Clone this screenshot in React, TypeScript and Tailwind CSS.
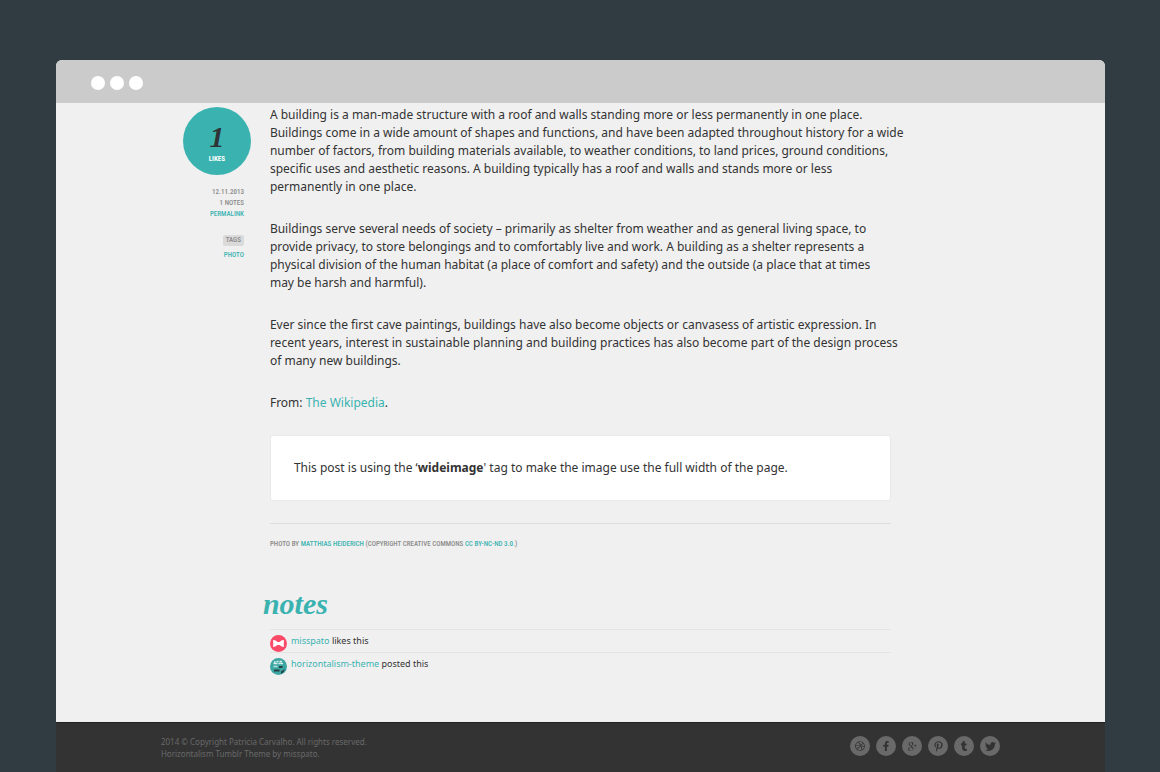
import type { ReactNode } from "react";
import type { IconType } from "react-icons";
import { FaDribbble, FaFacebookF, FaPinterestP, FaTumblr, FaTwitter } from "react-icons/fa";
import { TiSocialGooglePlus } from "react-icons/ti";

const SOCIAL: { name: string; icon: IconType; size: number }[] = [
  { name: "Dribbble", icon: FaDribbble, size: 10 },
  { name: "Facebook", icon: FaFacebookF, size: 10 },
  { name: "Google Plus", icon: TiSocialGooglePlus, size: 14 },
  { name: "Pinterest", icon: FaPinterestP, size: 11 },
  { name: "Tumblr", icon: FaTumblr, size: 10 },
  { name: "Twitter", icon: FaTwitter, size: 11 },
];

export default function App() {
  return (
    <div className="flex min-h-screen flex-col bg-[#303c41] pt-[60px] pr-[55px] pl-14 font-['Noto_Sans',sans-serif] text-[#333]">
      <div className="flex flex-1 flex-col overflow-hidden rounded-t-[6px] bg-[#f0f0f0]">
        <TitleBar />
        <main className="mx-auto grid w-4/5 flex-1 grid-cols-[109px_1fr_109px]">
          <PostMeta />
          <div>
            <Post />
            <Notes />
          </div>
        </main>
        <Footer />
      </div>
    </div>
  );
}

function TitleBar() {
  return (
    <div className="flex h-[43px] items-center gap-[5px] bg-[#cbcbcb] pt-[3px] pl-[35px]">
      <span className="size-3.5 rounded-full bg-white" />
      <span className="size-3.5 rounded-full bg-white" />
      <span className="size-3.5 rounded-full bg-white" />
    </div>
  );
}

function PostMeta() {
  return (
    <aside className="flex flex-col items-end pt-1 font-['Roboto_Condensed','Liberation_Sans_Narrow','Roboto',sans-serif] text-[7px] font-medium text-[#8a8a8a] uppercase">
      <div className="mr-[19px] flex size-[68px] flex-col items-center rounded-full bg-[#3ab3b0] pt-[14px] text-white">
        <span className="font-['Liberation_Serif',serif] text-[30px] leading-8 font-bold text-[#2e3436] italic">1</span>
        <span className="leading-3 font-bold">Likes</span>
      </div>
      <div className="mt-3 mr-[26px] flex flex-col items-end leading-[11px]">
        <span>12.11.2013</span>
        <span>1 Notes</span>
        <Link>Permalink</Link>
        <span className="mt-[15px] rounded-[2px] bg-[#dadada] px-[3px]">Tags</span>
        <span className="mt-1">
          <Link>Photo</Link>
        </span>
      </div>
    </aside>
  );
}

function Post() {
  return (
    <article className="text-[12px] leading-[18px]">
      {/* prose hangs slightly into the right gutter so the longest lines stay whole */}
      <div className="-mr-4 space-y-6 pt-[3px]">
        <p>
          A building is a man-made structure with a roof and walls standing more or less permanently in one place.
          <br />
          Buildings come in a wide amount of shapes and functions, and have been adapted throughout history for a wide
          <br />
          number of factors, from building materials available, to weather conditions, to land prices, ground conditions,
          <br />
          specific uses and aesthetic reasons. A building typically has a roof and walls and stands more or less
          <br />
          permanently in one place.
        </p>
        <p>
          Buildings serve several needs of society – primarily as shelter from weather and as general living space, to
          <br />
          provide privacy, to store belongings and to comfortably live and work. A building as a shelter represents a
          <br />
          physical division of the human habitat (a place of comfort and safety) and the outside (a place that at times
          <br />
          may be harsh and harmful).
        </p>
        <p>
          Ever since the first cave paintings, buildings have also become objects or canvasess of artistic expression. In
          <br />
          recent years, interest in sustainable planning and building practices has also become part of the design process
          <br />
          of many new buildings.
        </p>
        <p>
          From: <Link>The Wikipedia</Link>.
        </p>
      </div>
      <p className="mt-[23px] rounded-[3px] border border-[#e8e8e8] bg-white px-[23px] py-[23px]">
        This post is using the ‘<strong>wideimage</strong>' tag to make the image use the full width of the page.
      </p>
      <footer className="mt-[22px] border-t border-[#dedede] pt-[14px] font-['Roboto_Condensed','Liberation_Sans_Narrow','Roboto',sans-serif] text-[7px] leading-3 font-medium text-[#8a8a8a] uppercase">
        Photo by <Link>Matthias Heiderich</Link> (Copyright Creative Commons <Link>CC BY-NC-ND 3.0.</Link>)
      </footer>
    </article>
  );
}

function Notes() {
  return (
    <section className="mt-[34px] pb-10">
      <h2 className="-ml-[7px] font-['Liberation_Serif',serif] text-[30px] leading-10 font-bold text-[#3ab3b0] italic">notes</h2>
      <ul className="mt-[5px] text-[9px] leading-[22px]">
        <Note user="misspato" action="likes this" avatar={<BowTieAvatar />} />
        <Note user="horizontalism-theme" action="posted this" avatar={<ThemeAvatar />} />
      </ul>
    </section>
  );
}

function Note({ user, action, avatar }: { user: string; action: string; avatar: ReactNode }) {
  return (
    <li className="flex gap-1 border-t border-[#e4e4e4]">
      <span className="pt-[5px]">{avatar}</span>
      <span>
        <Link>{user}</Link> {action}
      </span>
    </li>
  );
}

function BowTieAvatar() {
  return (
    <svg viewBox="0 0 34 34" className="size-[17px]" aria-hidden="true">
      <circle cx="17" cy="17" r="17" fill="#fb4a68" />
      <path d="M6 10 Q12 10 15 14 H19 Q22 10 28 10 Q27 17 28 24 Q22 23 19 20 H15 Q12 23 6 24 Q7 17 6 10Z" fill="#fff" />
    </svg>
  );
}

function ThemeAvatar() {
  return (
    <svg viewBox="0 0 34 34" className="size-[17px]" aria-hidden="true">
      <circle cx="17" cy="17" r="17" fill="#3ba5a2" />
      <path d="M8 8h3M13 7h4M19 7h5M7 11h8M17 11h9" stroke="#d7f0ee" strokeWidth="3" />
      <path d="M7 17h8" stroke="#b5dfdd" strokeWidth="3" />
      <path d="M18 16h7v4h-7zM8 23h11v4H8zM22 27l8-5-3 6-5 4z" fill="#263f43" />
    </svg>
  );
}

function Footer() {
  return (
    <footer className="border-t border-[#222] bg-[#333]">
      <div className="mx-auto flex w-4/5 items-start justify-between pt-[13px] pb-3 text-[8px] leading-3 text-[#696969]">
        <p>
          2014 © Copyright Patricia Carvalho. All rights reserved.
          <br />
          Horizontalism Tumblr Theme by misspato.
        </p>
        <nav className="flex gap-1.5">
          {SOCIAL.map(({ name, icon: Icon, size }) => (
            <a key={name} href="#" aria-label={name} className="flex size-5 items-center justify-center rounded-full bg-[#696969] text-[#333]">
              <Icon size={size} />
            </a>
          ))}
        </nav>
      </div>
    </footer>
  );
}

function Link({ children }: { children: ReactNode }) {
  return (
    <a href="#" className="text-[#3ab3b0]">
      {children}
    </a>
  );
}
